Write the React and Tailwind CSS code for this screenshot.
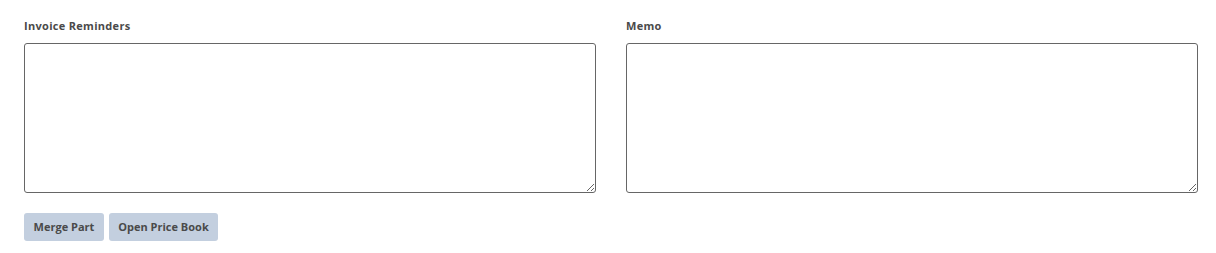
const Field = ({ label }) => {
    return (
        <div className="flex flex-col">
            <label className="text-[11px] leading-4 font-bold tracking-[0.3px] text-[#4a4a4a] mb-[9px]">{label}</label>
            <textarea className="h-[150px] w-full border border-[#666666] rounded-[3px] bg-white p-2 text-sm outline-none" />
        </div>
    )
};

const App = () => {
    return (
        <div className="min-h-[253px] bg-white pt-[18px] pl-6 pr-[18px] font-['Open_Sans',sans-serif]">
            <div className="grid grid-cols-2 gap-[30px]">
                <Field label="Invoice Reminders" />
                <Field label="Memo" />
            </div>
            <div className="flex gap-[5px] mt-5">
                <button className="h-7 w-20 text-[11px] font-bold text-[#4a4a4a] rounded-[3px] bg-[#c3cfdf]">Merge Part</button>
                <button className="h-7 w-[109px] text-[11px] font-bold text-[#4a4a4a] rounded-[3px] bg-[#c3cfdf]">Open Price Book</button>
            </div>
        </div>
    )
};

export default App;
